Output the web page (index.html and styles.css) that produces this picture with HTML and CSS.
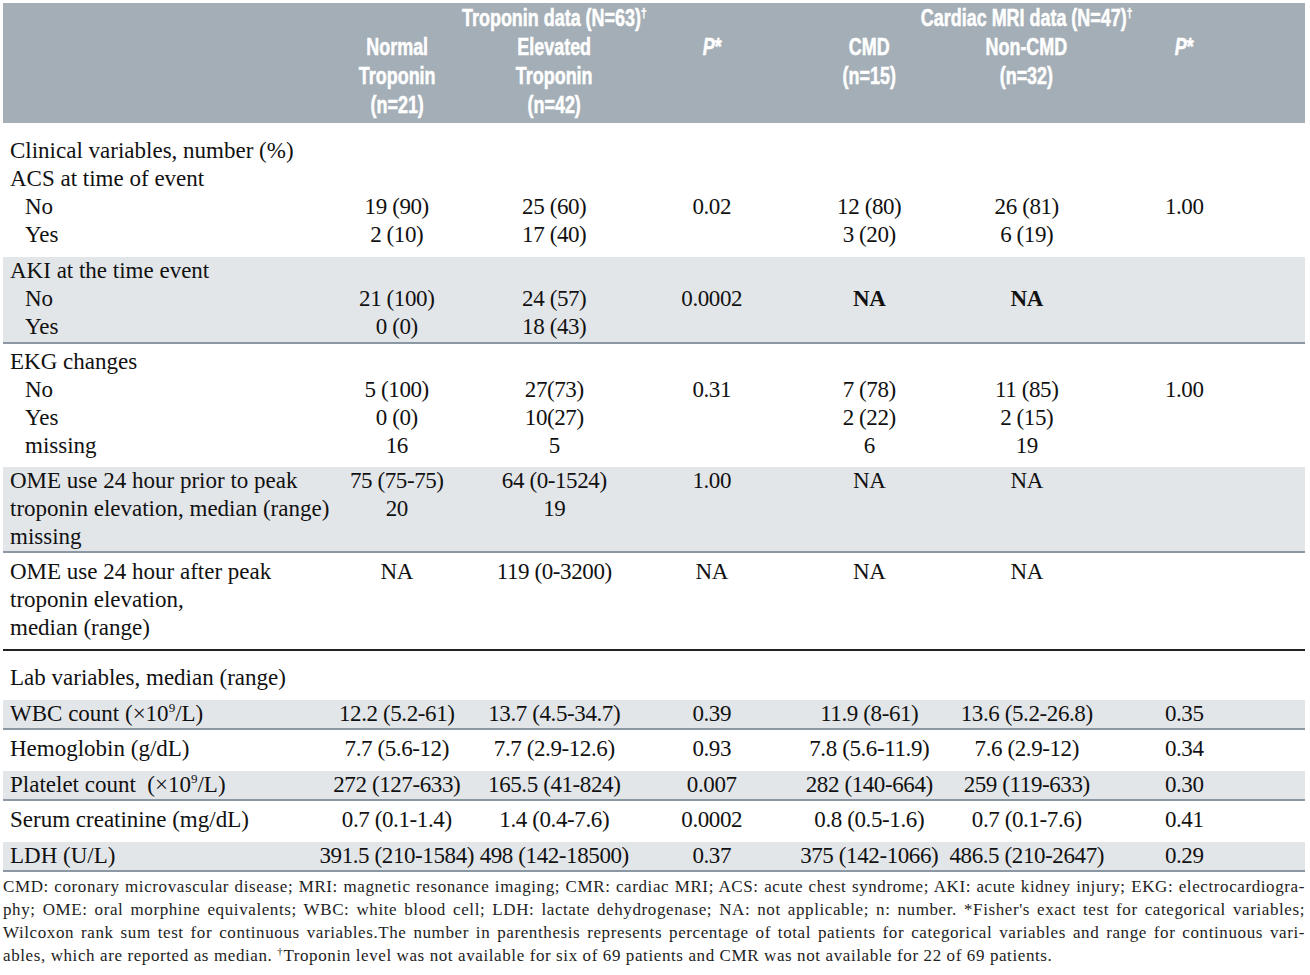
FILE: index.html
```html
<!DOCTYPE html>
<html>
<head>
<meta charset="utf-8">
<link rel="stylesheet" href="styles.css">
</head>
<body>
<div class="page">
<table class="tbl">
<colgroup>
<col class="c-label"><col class="c-num"><col class="c-num"><col class="c-num"><col class="c-num"><col class="c-num"><col class="c-num"><col class="c-pad">
</colgroup>
<thead>
<tr class="h1">
<th></th>
<th colspan="3"><span class="hx">Troponin data (N=63)<sup>†</sup></span></th>
<th colspan="3"><span class="hx">Cardiac MRI data (N=47)<sup>†</sup></span></th>
<th></th>
</tr>
<tr class="h2">
<th></th>
<th><span class="hx">Normal<br>Troponin<br>(n=21)</span></th>
<th><span class="hx">Elevated<br>Troponin<br>(n=42)</span></th>
<th><span class="hx"><i>P</i>*</span></th>
<th><span class="hx">CMD<br>(n=15)</span></th>
<th><span class="hx">Non-CMD<br>(n=32)</span></th>
<th><span class="hx"><i>P</i>*</span></th>
<th></th>
</tr>
</thead>
<tbody>
<tr class="w s1-top"><td class="lbl">Clinical variables, number (%)</td><td></td><td></td><td></td><td></td><td></td><td></td><td></td></tr>
<tr class="w"><td class="lbl">ACS at time of event</td><td></td><td></td><td></td><td></td><td></td><td></td><td></td></tr>
<tr class="w"><td class="lbl sub">No</td><td>19 (90)</td><td>25 (60)</td><td>0.02</td><td>12 (80)</td><td>26 (81)</td><td>1.00</td><td></td></tr>
<tr class="w s1-bot"><td class="lbl sub">Yes</td><td>2 (10)</td><td>17 (40)</td><td></td><td>3 (20)</td><td>6 (19)</td><td></td><td></td></tr>

<tr class="g"><td class="lbl">AKI at the time event</td><td></td><td></td><td></td><td></td><td></td><td></td><td></td></tr>
<tr class="g"><td class="lbl sub">No</td><td>21 (100)</td><td>24 (57)</td><td>0.0002</td><td><b>NA</b></td><td><b>NA</b></td><td></td><td></td></tr>
<tr class="g s2-bot rule"><td class="lbl sub">Yes</td><td>0 (0)</td><td>18 (43)</td><td></td><td></td><td></td><td></td><td></td></tr>

<tr class="w s3-top"><td class="lbl">EKG changes</td><td></td><td></td><td></td><td></td><td></td><td></td><td></td></tr>
<tr class="w"><td class="lbl sub">No</td><td>5 (100)</td><td>27(73)</td><td>0.31</td><td>7 (78)</td><td>11 (85)</td><td>1.00</td><td></td></tr>
<tr class="w"><td class="lbl sub">Yes</td><td>0 (0)</td><td>10(27)</td><td></td><td>2 (22)</td><td>2 (15)</td><td></td><td></td></tr>
<tr class="w s3-bot"><td class="lbl sub">missing</td><td>16</td><td>5</td><td></td><td>6</td><td>19</td><td></td><td></td></tr>

<tr class="g"><td class="lbl">OME use 24 hour prior to peak</td><td>75 (75-75)</td><td>64 (0-1524)</td><td>1.00</td><td>NA</td><td>NA</td><td></td><td></td></tr>
<tr class="g"><td class="lbl">troponin elevation, median (range)</td><td>20</td><td>19</td><td></td><td></td><td></td><td></td><td></td></tr>
<tr class="g rule"><td class="lbl">missing</td><td></td><td></td><td></td><td></td><td></td><td></td><td></td></tr>

<tr class="w s5-top"><td class="lbl">OME use 24 hour after peak</td><td>NA</td><td>119 (0-3200)</td><td>NA</td><td>NA</td><td>NA</td><td></td><td></td></tr>
<tr class="w"><td class="lbl">troponin elevation,</td><td></td><td></td><td></td><td></td><td></td><td></td><td></td></tr>
<tr class="w s5-bot black"><td class="lbl">median (range)</td><td></td><td></td><td></td><td></td><td></td><td></td><td></td></tr>

<tr class="w s6"><td class="lbl">Lab variables, median (range)</td><td></td><td></td><td></td><td></td><td></td><td></td><td></td></tr>
<tr class="g lab rule"><td class="lbl">WBC count (×10<sup class="exp">9</sup>/L)</td><td>12.2 (5.2-61)</td><td>13.7 (4.5-34.7)</td><td>0.39</td><td>11.9 (8-61)</td><td>13.6 (5.2-26.8)</td><td>0.35</td><td></td></tr>
<tr class="w lab"><td class="lbl">Hemoglobin (g/dL)</td><td>7.7 (5.6-12)</td><td>7.7 (2.9-12.6)</td><td>0.93</td><td>7.8 (5.6-11.9)</td><td>7.6 (2.9-12)</td><td>0.34</td><td></td></tr>
<tr class="g lab rule"><td class="lbl">Platelet count&nbsp; (×10<sup class="exp">9</sup>/L)</td><td>272 (127-633)</td><td>165.5 (41-824)</td><td>0.007</td><td>282 (140-664)</td><td>259 (119-633)</td><td>0.30</td><td></td></tr>
<tr class="w lab"><td class="lbl">Serum creatinine (mg/dL)</td><td>0.7 (0.1-1.4)</td><td>1.4 (0.4-7.6)</td><td>0.0002</td><td>0.8 (0.5-1.6)</td><td>0.7 (0.1-7.6)</td><td>0.41</td><td></td></tr>
<tr class="g lab rule"><td class="lbl">LDH (U/L)</td><td>391.5 (210-1584)</td><td>498 (142-18500)</td><td>0.37</td><td>375 (142-1066)</td><td>486.5 (210-2647)</td><td>0.29</td><td></td></tr>
</tbody>
</table>
<div class="notes">
<span class="ln">CMD: coronary microvascular disease; MRI: magnetic resonance imaging; CMR: cardiac MRI; ACS: acute chest syndrome; AKI: acute kidney injury; EKG: electrocardiogra-</span>
<span class="ln">phy; OME: oral morphine equivalents; WBC: white blood cell; LDH: lactate dehydrogenase; NA: not applicable; n: number. *Fisher's exact test for categorical variables;</span>
<span class="ln">Wilcoxon rank sum test for continuous variables.The number in parenthesis represents percentage of total patients for categorical variables and range for continuous vari-</span>
<span class="ln last">ables, which are reported as median. <sup>†</sup>Troponin level was not available for six of 69 patients and CMR was not available for 22 of 69 patients.</span>
</div>
</div>
</body>
</html>
```
FILE: styles.css
```css
html, body {
  margin: 0;
  padding: 0;
  background: #ffffff;
}
.page {
  padding: 3px 0 0 3px;
  width: 1302px;
}
.tbl {
  width: 1302px;
  border-collapse: collapse;
  table-layout: fixed;
  font-family: "Liberation Serif", "Times New Roman", serif;
  font-size: 23px;
  color: #111;
}
.c-label { width: 315px; }
.c-num { width: 157.5px; }
.c-pad { width: 42px; }

thead tr { background: #a4aeb6; }
thead th {
  font-family: "Liberation Sans", Arial, sans-serif;
  font-weight: bold;
  font-size: 23px;
  color: #ffffff;
  line-height: 29px;
  padding: 0;
  text-align: center;
  vertical-align: top;
}
thead tr.h1 th { padding-top: 1px; }
thead .hx {
  display: inline-block;
  transform: scaleX(0.78);
  transform-origin: center top;
  -webkit-text-stroke: 0.5px #ffffff;
}
thead tr.h2 th { padding-bottom: 3px; height: 87px; }
thead sup { font-size: 13px; line-height: 0; vertical-align: 9px; }

tbody td {
  padding: 0;
  line-height: 28px;
  text-align: center;
  vertical-align: top;
  white-space: nowrap;
  letter-spacing: -0.4px;
}
tbody td.lbl { text-align: left; padding-left: 7px; letter-spacing: 0; }
tbody td.sub { padding-left: 22px; }
tr.w { background: #ffffff; }
tr.g { background: #e3e6e9; }

tr.rule td { border-bottom: 2px solid #8b97a2; }
tr.black td { border-bottom: 2px solid #222; }

tr.s1-top td { padding-top: 14px; }
tr.s1-bot td { padding-bottom: 8px; }
tr.s2-bot td { padding-bottom: 1px; }
tr.s3-top td { padding-top: 4px; }
tr.s3-bot td { padding-bottom: 7px; }
tr.s5-top td { padding-top: 5px; }
tr.s5-bot td { padding-bottom: 7px; }
tr.s6 td { padding-top: 13px; padding-bottom: 8px; }
tr.w.lab td { padding-top: 5px; padding-bottom: 8px; }

sup.exp { font-size: 13px; line-height: 0; vertical-align: 9px; }

.notes {
  font-family: "Liberation Serif", "Times New Roman", serif;
  font-size: 17px;
  line-height: 23px;
  letter-spacing: 0.6px;
  color: #222;
  padding-top: 3px;
}
.notes .ln {
  display: block;
  text-align: justify;
  text-align-last: justify;
}
.notes .ln.last { text-align-last: left; }
.notes sup { font-size: 11px; line-height: 0; vertical-align: 6px; }
```
